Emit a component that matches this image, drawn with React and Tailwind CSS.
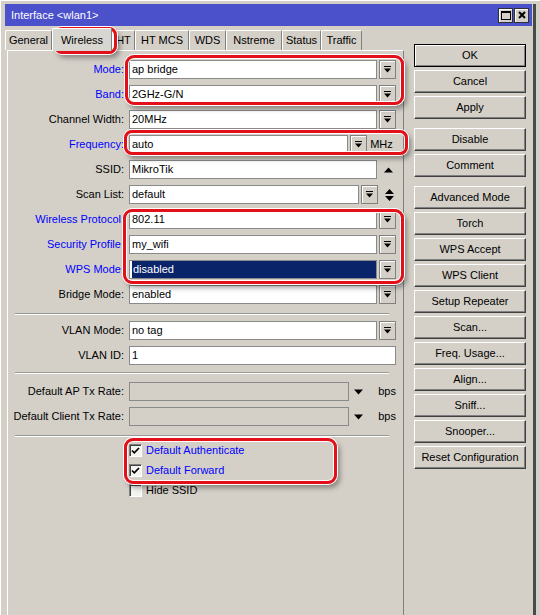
// MikroTik Winbox "Interface <wlan1>" window, Wireless tab, with red call-outs.

const DropIcon = () => (
  <svg width="7" height="7" viewBox="0 0 7 7" fill="#000">
    <rect x="0" y="0" width="7" height="1" />
    <path d="M0 2.5h7L3.5 6.5z" />
  </svg>
);

function DropBtn() {
  return (
    <div className="ml-[2px] flex h-[19px] w-[17px] shrink-0 items-center justify-center border border-[#808080] bg-[#d4d0c8] shadow-[inset_1px_1px_0_#ffffff]">
      <DropIcon />
    </div>
  );
}

function Field({ value, selected, disabled }) {
  return (
    <div
      className={
        "flex h-[19px] min-w-0 flex-1 items-center border border-[#8a8a8a] pl-[2px] " +
        (disabled ? "bg-[#d4d0c8]" : "bg-white")
      }
    >
      {selected ? (
        <span className="flex h-full flex-1 items-center bg-[#0a246a] pl-[1px] text-white">{value}</span>
      ) : (
        value
      )}
    </div>
  );
}

function Row({ label, blue, children }) {
  return (
    <div className="flex h-[25px] items-center">
      <div className={"w-[117px] shrink-0 pr-[1px] text-right " + (blue ? "text-[#0000ff]" : "text-black")}>
        {label}:
      </div>
      <div className="ml-[4px] flex flex-1 items-center">{children}</div>
    </div>
  );
}

function Separator() {
  return <div className="mx-[7px] h-[2px] border-t border-b border-t-[#9a9892] border-b-white" />;
}

function Check({ label, checked, blue }) {
  return (
    <div className="ml-[121px] flex h-[20px] items-center">
      <div className="flex h-[13px] w-[13px] items-center justify-center border border-t-[#808080] border-l-[#808080] border-r-white border-b-white bg-[#f4f4f0] shadow-[inset_1px_1px_0_#404040]">
        {checked ? (
          <svg width="9" height="9" viewBox="0 0 9 9">
            <path d="M1 4.5l2.3 2.3L8 2" fill="none" stroke="#000" strokeWidth="1.7" />
          </svg>
        ) : null}
      </div>
      <span className={"ml-[4px] " + (blue ? "text-[#0000ff]" : "text-black")}>{label}</span>
    </div>
  );
}

const tabs = [
  { name: "General", w: "w-[47px]" },
  { name: "Wireless", w: "w-[60px]", active: true },
  { name: "HT", w: "w-[23px]" },
  { name: "HT MCS", w: "w-[54px]" },
  { name: "WDS", w: "w-[37px]" },
  { name: "Nstreme", w: "w-[56px]" },
  { name: "Status", w: "w-[39px]" },
  { name: "Traffic", w: "w-[41px]" },
];

const buttons = [
  { name: "OK", def: true },
  { name: "Cancel" },
  { name: "Apply" },
  { name: "Disable", gap: true },
  { name: "Comment" },
  { name: "Advanced Mode", gap: true },
  { name: "Torch" },
  { name: "WPS Accept" },
  { name: "WPS Client" },
  { name: "Setup Repeater" },
  { name: "Scan..." },
  { name: "Freq. Usage..." },
  { name: "Align..." },
  { name: "Sniff..." },
  { name: "Snooper..." },
  { name: "Reset Configuration" },
];

export default function App() {
  return (
    <div className="relative h-[615px] w-[540px] overflow-hidden border-t border-l border-white bg-[#d4d0c8] font-['Liberation_Sans',Arial,sans-serif] text-[11px] leading-none text-black">
      <div className="ml-[4px] mt-[3px] flex h-[612px] w-[531px] flex-col border-r-[3px] border-r-[#4a4a4a]">
        {/* title bar */}
        <div className="mr-[1px] flex h-[22px] shrink-0 items-center justify-between bg-[#4b50cb] pl-[6px] text-white">
          <span>Interface &lt;wlan1&gt;</span>
          <div className="mr-[3px] flex gap-[1px]">
            <div className="flex h-[15px] w-[15px] items-center justify-center border border-[#303030] bg-[#d4d0c8] shadow-[inset_1px_1px_0_#ffffff]">
              <div className="h-[9px] w-[10px] border border-t-2 border-black" />
            </div>
            <div className="flex h-[15px] w-[15px] items-center justify-center border border-[#303030] bg-[#d4d0c8] shadow-[inset_1px_1px_0_#ffffff]">
              <svg width="8" height="8" viewBox="0 0 8 8">
                <path d="M1 1l6 6M7 1L1 7" stroke="#000" strokeWidth="2" />
              </svg>
            </div>
          </div>
        </div>

        <div className="flex min-h-0 flex-1">
          {/* left: tabs + panel */}
          <div className="flex w-[399px] flex-col">
            <div className="mt-[2px] flex h-[22px] items-end">
              {tabs.map((t) => (
                <div
                  key={t.name}
                  className={
                    "flex items-center justify-center rounded-t-[2px] border-t border-l border-r border-t-white border-l-white border-r-[#808080] " +
                    t.w +
                    (t.active ? " relative z-10 -mb-[1px] h-[23px] bg-[#d8d6d0]" : " h-[20px]")
                  }
                >
                  {t.name}
                </div>
              ))}
            </div>
            <div className="ml-[2px] flex-1 border-t border-l border-r border-t-white border-l-white border-r-[#808080] pt-[6px] pr-[7px]">
              <Row label="Mode" blue>
                <Field value="ap bridge" />
                <DropBtn />
              </Row>
              <Row label="Band" blue>
                <Field value="2GHz-G/N" />
                <DropBtn />
              </Row>
              <Row label="Channel Width">
                <Field value="20MHz" />
                <DropBtn />
              </Row>
              <Row label="Frequency" blue>
                <Field value="auto" />
                <DropBtn />
                <span className="w-[29px] text-center">MHz</span>
              </Row>
              <Row label="SSID">
                <Field value="MikroTik" />
                <div className="flex w-[19px] justify-center pl-[3px]">
                  <svg width="9" height="6" viewBox="0 0 9 6">
                    <path d="M0 5.5L4.5 0.5 9 5.5z" fill="#000" />
                  </svg>
                </div>
              </Row>
              <Row label="Scan List">
                <Field value="default" />
                <DropBtn />
                <div className="flex w-[18px] justify-center pl-[4px]">
                  <svg width="9" height="12" viewBox="0 0 9 12">
                    <path d="M0 5L4.5 0 9 5z M0 7L4.5 12 9 7z" fill="#000" />
                  </svg>
                </div>
              </Row>
              <Row label="Wireless Protocol" blue>
                <Field value="802.11" />
                <DropBtn />
              </Row>
              <Row label="Security Profile" blue>
                <Field value="my_wifi" />
                <DropBtn />
              </Row>
              <Row label="WPS Mode" blue>
                <Field value="disabled" selected />
                <DropBtn />
              </Row>
              <Row label="Bridge Mode">
                <Field value="enabled" />
                <DropBtn />
              </Row>

              <div className="mt-[6px] mb-[3px]">
                <Separator />
              </div>
              <Row label="VLAN Mode">
                <Field value="no tag" />
                <DropBtn />
              </Row>
              <Row label="VLAN ID">
                <Field value="1" />
              </Row>

              <div className="mt-[4px] mb-[5px]">
                <Separator />
              </div>
              <Row label="Default AP Tx Rate">
                <Field value="" disabled />
                <div className="flex w-[18px] justify-center">
                  <svg width="9" height="6" viewBox="0 0 9 6">
                    <path d="M0 0.5h9L4.5 5.5z" fill="#000" />
                  </svg>
                </div>
                <span className="w-[29px] text-right">bps</span>
              </Row>
              <Row label="Default Client Tx Rate">
                <Field value="" disabled />
                <div className="flex w-[18px] justify-center">
                  <svg width="9" height="6" viewBox="0 0 9 6">
                    <path d="M0 0.5h9L4.5 5.5z" fill="#000" />
                  </svg>
                </div>
                <span className="w-[29px] text-right">bps</span>
              </Row>

              <div className="mt-[6px] mb-[3px]">
                <Separator />
              </div>
              <Check label="Default Authenticate" checked blue />
              <Check label="Default Forward" checked blue />
              <Check label="Hide SSID" />
            </div>
          </div>

          {/* right: buttons */}
          <div className="ml-[10px] mt-[18px] flex w-[112px] flex-col">
            {buttons.map((b, i) => (
              <div
                key={b.name}
                className={
                  "flex h-[23px] items-center justify-center bg-[#d4d0c8] " +
                  (i === 0 ? "" : b.gap ? "mt-[9px] " : "mt-[3px] ") +
                  (b.def
                    ? "border border-black shadow-[inset_1px_1px_0_#ffffff,inset_-1px_-1px_0_#808080]"
                    : "border border-t-white border-l-white border-r-[#404040] border-b-[#404040] shadow-[inset_-1px_-1px_0_#808080]")
                }
              >
                {b.name}
              </div>
            ))}
          </div>
        </div>
      </div>

      {/* red call-outs */}
      <div className="pointer-events-none absolute left-[53px] top-[26px] h-[27px] w-[63px] rounded-[8px] border-[3px] border-[#e3101a] shadow-[0_0_0_1px_#ffffff,3px_4px_5px_rgba(0,0,0,0.35),inset_0_0_0_1px_#ffffff]" />
      <div className="pointer-events-none absolute left-[124px] top-[54px] h-[50px] w-[279px] rounded-[9px] border-[3px] border-[#e3101a] shadow-[0_0_0_1px_#ffffff,3px_4px_5px_rgba(0,0,0,0.35),inset_0_0_0_1px_#ffffff]" />
      <div className="pointer-events-none absolute left-[123px] top-[129px] h-[25px] w-[284px] rounded-[8px] border-[3px] border-[#e3101a] shadow-[0_0_0_1px_#ffffff,3px_4px_5px_rgba(0,0,0,0.35),inset_0_0_0_1px_#ffffff]" />
      <div className="pointer-events-none absolute left-[122px] top-[208px] h-[75px] w-[281px] rounded-[9px] border-[3px] border-[#e3101a] shadow-[0_0_0_1px_#ffffff,3px_4px_5px_rgba(0,0,0,0.35),inset_0_0_0_1px_#ffffff]" />
      <div className="pointer-events-none absolute left-[123px] top-[437px] h-[46px] w-[213px] rounded-[9px] border-[3px] border-[#e3101a] shadow-[0_0_0_1px_#ffffff,3px_4px_5px_rgba(0,0,0,0.35),inset_0_0_0_1px_#ffffff]" />
    </div>
  );
}
